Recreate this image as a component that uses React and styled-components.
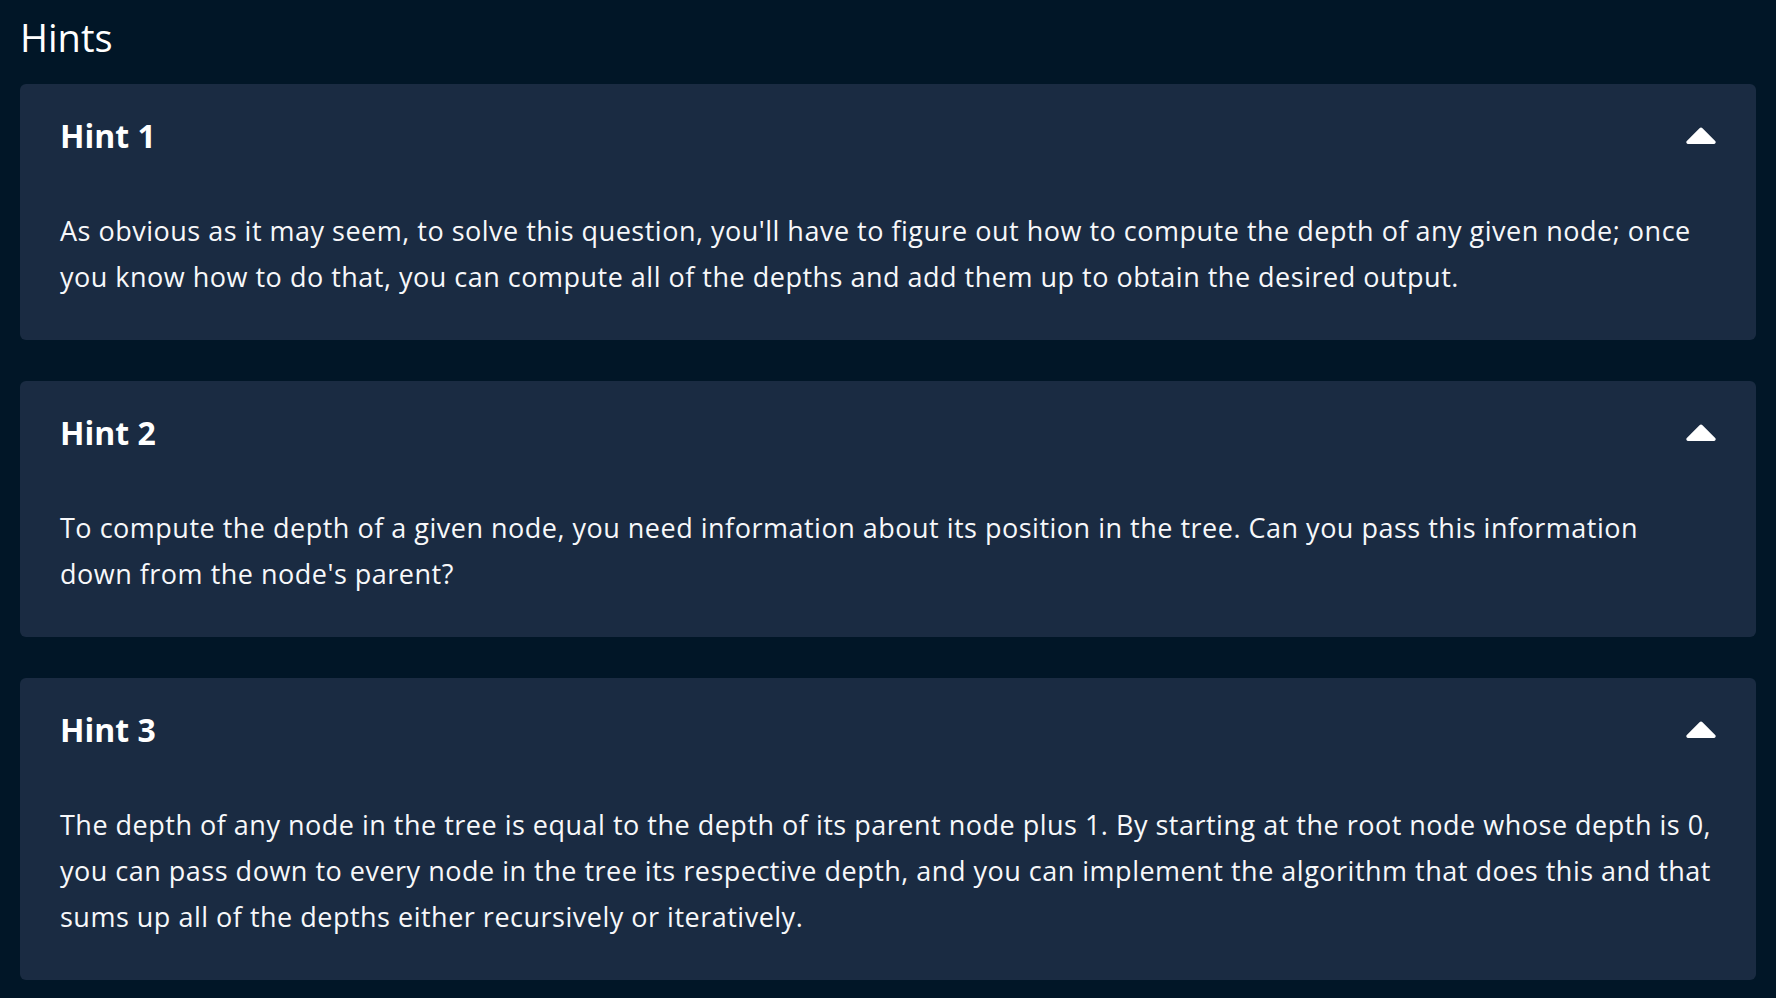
import React from "react";
import styled, { createGlobalStyle } from "styled-components";

const GlobalStyle = createGlobalStyle`
    body {
        margin: 0;
        background: #011627;
        font-family: "Open Sans", "Noto Sans", sans-serif;
        color: #ffffff;
    }
`;

const Page = styled.div`
    padding: 0 20px 20px;
`;

const Title = styled.h2`
    margin: 0;
    padding: 12px 0 20px;
    font-size: 38px;
    font-weight: 400;
    line-height: 1.362;
`;

const List = styled.div`
    display: flex;
    flex-direction: column;
    gap: 41px;
`;

const Card = styled.section`
    background: #1a2b42;
    border-radius: 6px;
`;

const Header = styled.div`
    display: flex;
    align-items: center;
    justify-content: space-between;
    height: 104px;
    padding: 0 40px;
`;

const HintTitle = styled.h3`
    margin: 0;
    font-size: 32px;
    font-weight: 700;
    line-height: 1.362;
`;

const Body = styled.p`
    margin: 0;
    padding: 20px 40px 40px;
    font-size: 27px;
    line-height: 46px;
    letter-spacing: 0.5px;
    color: #f7f8fa;
`;

const Caret = () => (
    <svg width="30" height="17" viewBox="0 0 30 17">
        <path d="M13.5 1.2a2.1 2.1 0 0 1 3 0L29.2 14a1.8 1.8 0 0 1 -1.3 3H2.1a1.8 1.8 0 0 1 -1.3 -3Z" fill="#ffffff" />
    </svg>
);

const hints = [
    "As obvious as it may seem, to solve this question, you'll have to figure out how to compute the depth of any given node; once you know how to do that, you can compute all of the depths and add them up to obtain the desired output.",
    "To compute the depth of a given node, you need information about its position in the tree. Can you pass this information down from the node's parent?",
    "The depth of any node in the tree is equal to the depth of its parent node plus 1. By starting at the root node whose depth is 0, you can pass down to every node in the tree its respective depth, and you can implement the algorithm that does this and that sums up all of the depths either recursively or iteratively.",
];

export default function App() {
    return (
        <Page>
            <GlobalStyle />
            <Title>Hints</Title>
            <List>
                {hints.map((text, i) => (
                    <Card key={i}>
                        <Header>
                            <HintTitle>Hint {i + 1}</HintTitle>
                            <Caret />
                        </Header>
                        <Body>{text}</Body>
                    </Card>
                ))}
            </List>
        </Page>
    );
}
